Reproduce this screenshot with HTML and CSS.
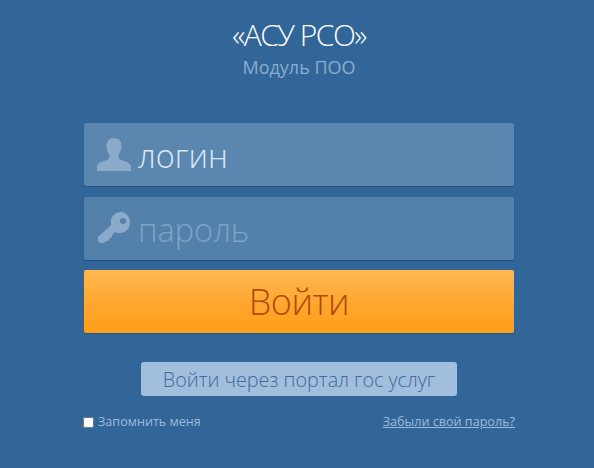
FILE: index.html
```html
<!DOCTYPE html>
<html lang="ru">
<head>
  <meta charset="UTF-8">
  <title>АСУ РСО</title>
  <link rel="stylesheet" href="styles.css">
</head>
<body>
  <div class="login-box">
    <h1 class="title">«АСУ РСО»</h1>
    <div class="subtitle">Модуль ПОО</div>

    <form class="form">
      <div class="field field-login">
        <svg class="icon" viewBox="0 0 34 34" width="34" height="34">
          <path d="M17 0c-4.700 0-7.500 3.200-7.500 7.800 0 3.200 1 6 2.300 8 .8 1.200 1 2.400.6 3.600-.6 1.800-3.400 2.900-6.400 3.900C2.800 24.500 0 26 0 29v4h34v-4c0-3-2.800-4.500-6-5.700-3-1-5.800-2.100-6.400-3.900-.4-1.200-.2-2.400.6-3.600 1.300-2 2.300-4.800 2.300-8C24.500 3.200 21.700 0 17 0z"/>
        </svg>
        <span class="field-text">логин</span>
      </div>
      <div class="field field-pass">
        <svg class="icon" viewBox="0 0 34 34" width="34" height="34">
          <path fill-rule="evenodd" d="M24 0C18.400 0 13.800 4.500 13.800 10c0 1 .2 2 .5 3L1 25v4l2 2h4l2-2h2l2-3 2-1 .5-2.500 2.500-2.600c1.500.8 3.200 1.100 5 1.100 5.600 0 10-4.500 10-10S29.600 0 24 0zM26 6a3 3 0 1 1 0 6 3 3 0 0 1 0-6z"/>
        </svg>
        <span class="field-text">пароль</span>
      </div>
      <button class="btn-login" type="button">Войти</button>
      <button class="btn-gos" type="button">Войти через портал гос услуг</button>

      <div class="bottom-row">
        <label class="remember"><input type="checkbox">Запомнить меня</label>
        <a class="forgot" href="#">Забыли свой пароль?</a>
      </div>
    </form>
  </div>
</body>
</html>
```

FILE: styles.css
```css
*, *::before, *::after {
    box-sizing: border-box;
}
html, body {
    height: 100%;
}
body {
    margin: 0;
    background-color: #326699;
    font-family: 'Open Sans', 'Noto Sans', sans-serif;
    overflow: hidden;
}
.login-box {
    width: 432px;
    margin-left: 84px;
    padding-top: 18px;
}
.title {
    margin: 0;
    width: 430px;
    text-align: center;
    font-size: 30px;
    line-height: 34px;
    font-weight: 300;
    letter-spacing: -1.5px;
    color: #fff;
}
.subtitle {
    width: 430px;
    margin-top: 4px;
    text-align: center;
    font-size: 18px;
    line-height: 23px;
    color: #8badd0;
}
.form {
    margin-top: 44px;
}
.field {
    display: flex;
    align-items: center;
    width: 430px;
    height: 63px;
    margin-bottom: 11px;
    padding-left: 13px;
    border-radius: 2px;
    box-shadow: 0 1px 1px rgba(30, 70, 115, 0.7);
}
.field-login {
    background-color: #5a86b0;
}
.field-pass {
    background-color: #5480ac;
}
.icon {
    flex: none;
    fill: #8cabcb;
}
.field-text {
    margin-left: 7px;
    padding-top: 2px;
    font-size: 32.5px;
    line-height: 40px;
    font-weight: 300;
}
.field-login .field-text {
    color: #dbe8f5;
}
.field-pass .field-text {
    color: #7fa2c6;
}
.btn-login {
    display: block;
    width: 430px;
    height: 63px;
    margin-top: -1px;
    padding: 0;
    border: none;
    border-radius: 2px;
    background: linear-gradient(to bottom, #ffb852, #ffa62f 55%, #ff9e17);
    box-shadow: 0 1px 1px rgba(30, 70, 115, 0.5);
    font-family: inherit;
    font-size: 36px;
    font-weight: 300;
    letter-spacing: -0.5px;
    color: #b14a06;
}
.btn-gos {
    display: block;
    width: 316px;
    height: 34px;
    margin: 29px 0 0 57px;
    padding: 0;
    border: none;
    border-radius: 3px;
    background-color: #a2bedd;
    font-family: inherit;
    font-size: 19.8px;
    font-weight: 300;
    color: #3f6a99;
}
.bottom-row {
    display: flex;
    justify-content: space-between;
    align-items: center;
    width: 431px;
    margin-top: 16px;
    font-size: 12.6px;
    line-height: 20px;
    color: #9cbadb;
}
.remember {
    display: flex;
    align-items: center;
    margin-left: -1px;
}
.remember input {
    width: 11px;
    height: 11px;
    margin: 0 4px 0 0;
}
.forgot {
    color: #9cbadb;
}
```
